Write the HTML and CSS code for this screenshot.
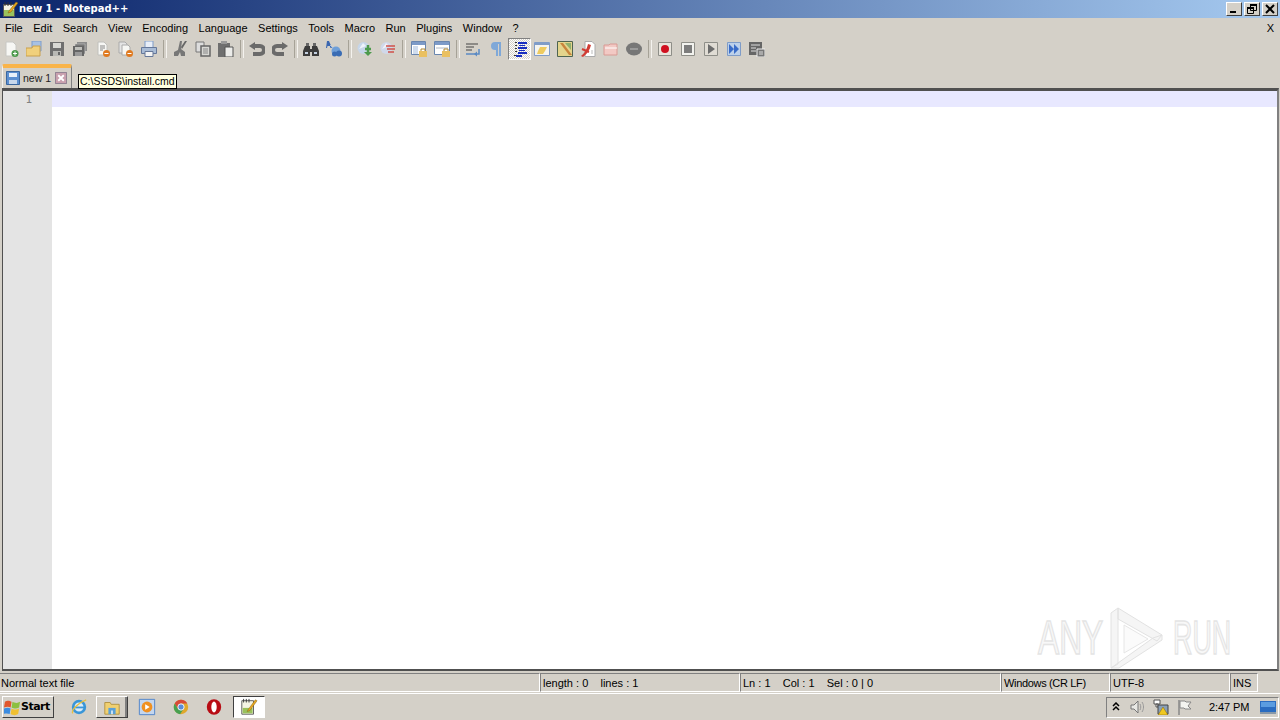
FILE: index.html
```html
<!DOCTYPE html>
<html lang="en">
<head>
<meta charset="utf-8">
<title>new 1 - Notepad++</title>
<link rel="stylesheet" href="styles.css">
</head>
<body>
<div class="app">
  <header class="titlebar">
    <svg class="ti" viewBox="0 0 16 16"><path d="M1.500 3.500h11v12h-11z" fill="#f4f4e4" stroke="#555"/><path d="M2 9h10v6H2z" fill="#9ac15c"/><path d="M3 1v4M6 1v4M9 1v4" stroke="#333"/><path d="M7 10l7-9 2 1-7 9-3 1z" fill="#e8a820" stroke="#7a5a10" stroke-width=".5"/></svg>
    <span class="title">new 1 - Notepad++</span>
    <div class="winbtns">
      <button class="wb"><svg viewBox="0 0 14 12"><path d="M3 8h6v2H3z" fill="#000"/></svg></button>
      <button class="wb"><svg viewBox="0 0 14 12"><path d="M5.500 1.500h6v6h-6zM2.500 4.500h6v6h-6z" fill="#d4d0c8" stroke="#000"/><path d="M5 1h7v2H5zM2 4h7v2H2z" fill="#000"/></svg></button>
      <button class="wb"><svg viewBox="0 0 14 12"><path d="M3 2l8 8M11 2l-8 8" stroke="#000" stroke-width="2"/></svg></button>
    </div>
  </header>

  <nav class="menubar">
    <span>File</span><span>Edit</span><span>Search</span><span>View</span><span>Encoding</span><span>Language</span><span>Settings</span><span>Tools</span><span>Macro</span><span>Run</span><span>Plugins</span><span>Window</span><span>?</span>
    <span class="menux">X</span>
  </nav>

  <div class="toolbar">
    <i class="tb"><svg viewBox="0 0 16 16"><path d="M3 1h7l3 3v11H3z" fill="#f7f7f4" stroke="#c8c8c4"/><circle cx="12" cy="12.500" r="3.500" fill="#4c9a4c"/><path d="M10 12.500h4M12 10.500v4" stroke="#fff"/></svg></i>
    <i class="tb"><svg viewBox="0 0 16 16"><path d="M6 0h9v10H6z" fill="#a7c1e4" stroke="#7f9cc8"/><path d="M0 7h6l1-2h7v10H0z" fill="#f1d07c" stroke="#c9a04c"/></svg></i>
    <i class="tb"><svg viewBox="0 0 16 16"><path d="M1 1h14v14H1z" fill="#6f6f6f"/><path d="M4 2h8v5H4z" fill="#d8d8d4"/><path d="M4 10h8v5H4z" fill="#b9b9b5"/><path d="M9 11h2v3H9z" fill="#666"/></svg></i>
    <i class="tb"><svg viewBox="0 0 16 16"><path d="M5 1h10v9H5z" fill="#8c8c8c"/><path d="M3 3h10v10H3z" fill="#777" stroke="#ccc" stroke-width=".5"/><path d="M1 5h11v10H1z" fill="#666"/><path d="M3 6h7v3H3z" fill="#c0c0bc"/><path d="M3 11h7v4H3z" fill="#999"/></svg></i>
    <i class="tb"><svg viewBox="0 0 16 16"><path d="M3 1h6l3 3v10H3z" fill="#f7f7f4" stroke="#c0c0bc"/><path d="M5 5h5M5 7h5M5 9h3" stroke="#888"/><circle cx="11.500" cy="12.500" r="3.500" fill="#e07a20"/><path d="M9.500 12.500h4" stroke="#fff"/></svg></i>
    <i class="tb"><svg viewBox="0 0 16 16"><path d="M1 1h6l2 2v9H1z" fill="#e4e4e4" stroke="#aaa"/><path d="M4 4h6l2 2v8H4z" fill="#f7f7f4" stroke="#aaa"/><circle cx="11.500" cy="12.500" r="3.500" fill="#e07a20"/><path d="M9.500 12.500h4" stroke="#fff"/></svg></i>
    <i class="tb"><svg viewBox="0 0 16 16"><path d="M4 0h8v7H4z" fill="#e8eef8" stroke="#7f9cc8"/><path d="M.5 6.500h15v6H.5z" fill="#a9bcd6" stroke="#66789a"/><path d="M4 10.500h8v5H4z" fill="#f4f4f4" stroke="#66789a"/></svg></i>
    <b class="sep"></b>
    <i class="tb"><svg viewBox="0 0 16 16"><path d="M8 0h2L9 8l4 3v4H9L8 11l-2 4H2v-4l4-2z" fill="#777"/><path d="M13 0h2L10 8 9 6z" fill="#666"/></svg></i>
    <i class="tb"><svg viewBox="0 0 16 16"><path d="M1 1h8v10H1z" fill="#ddd" stroke="#777"/><path d="M6 5h9v10H6z" fill="#d8d8d4" stroke="#666" stroke-width="1.500"/><path d="M8 8h5M8 10h5M8 12h5" stroke="#888"/></svg></i>
    <i class="tb"><svg viewBox="0 0 16 16"><path d="M0 2h12v14H0z" fill="#6f6f6f"/><path d="M3 0h6v3H3z" fill="#999"/><path d="M7 6h8v10H7z" fill="#ececea" stroke="#555"/></svg></i>
    <b class="sep"></b>
    <i class="tb"><svg viewBox="0 0 16 16"><path d="M5 5h6a3.500 3.500 0 0 1 0 8H4" fill="none" stroke="#6a6a6a" stroke-width="4"/><path d="M0 5l6-4v8z" fill="#6a6a6a"/></svg></i>
    <i class="tb"><svg viewBox="0 0 16 16"><path d="M11 5H5a3.500 3.500 0 0 0 0 8h7" fill="none" stroke="#6a6a6a" stroke-width="4"/><path d="M16 5l-6-4v8z" fill="#6a6a6a"/></svg></i>
    <b class="sep"></b>
    <i class="tb"><svg viewBox="0 0 16 16"><path d="M2 5h5v3h2V5h5l2 5v5H9v-4H7v4H0v-5z" fill="#3c3c3c"/><path d="M3 2h3v3H3zM10 2h3v3h-3z" fill="#666"/><path d="M2 11h3v2H2zM11 11h3v2h-3z" fill="#c4d0e0"/></svg></i>
    <i class="tb"><svg viewBox="0 0 16 16"><path d="M1 0h2l3 7H4.500l-.7-2H1.500L1 7H0z" fill="#3a66b0"/><path d="M4 4l4 4" stroke="#a8c0e0"/><circle cx="10" cy="10" r="4.500" fill="#6f9fd8"/><circle cx="13" cy="12.500" r="3" fill="#3a6cb4"/><circle cx="8.500" cy="13" r="2.500" fill="#3a6cb4"/></svg></i>
    <b class="sep"></b>
    <i class="tb"><svg viewBox="0 0 16 16"><circle cx="6.500" cy="7" r="6" fill="#c6d6ea"/><path d="M2 8l4-6 3 3z" fill="#eef3fa"/><path d="M11 4v7M8 8h6" stroke="#4c9a4c" stroke-width="2.500"/><path d="M7 11l4 4 4-4z" fill="#4c9a4c"/></svg></i>
    <i class="tb"><svg viewBox="0 0 16 16"><circle cx="6.500" cy="7" r="6" fill="#d0d8ea"/><path d="M2 8l4-6 3 3z" fill="#f0f2f8"/><path d="M6 5h9M7 8h8M8 11h6" stroke="#d0504a" stroke-width="1.500"/></svg></i>
    <b class="sep"></b>
    <i class="tb"><svg viewBox="0 0 16 16"><path d="M.5.500h14v13H.5z" fill="#fff" stroke="#6a86ae"/><path d="M1 1h13v3H1z" fill="#7c9ac8"/><path d="M2 5h5v8H2z" fill="#cfdcee"/><path d="M8 10h8v6H8z" fill="#eac060"/><path d="M10 10V8h4v2" fill="none" stroke="#b08830"/></svg></i>
    <i class="tb"><svg viewBox="0 0 16 16"><path d="M.5.500h15v13H.5z" fill="#fff" stroke="#6a86ae"/><path d="M1 1h14v3H1z" fill="#7c9ac8"/><path d="M2 7h12" stroke="#b0b8c4"/><path d="M8 10h8v6H8z" fill="#eac060"/><path d="M10 10V8h4v2" fill="none" stroke="#b08830"/></svg></i>
    <b class="sep"></b>
    <i class="tb"><svg viewBox="0 0 16 16"><path d="M1 3h12M1 6h8M1 9h6" stroke="#444"/><path d="M1 13h10" stroke="#5b8ac4" stroke-width="1.500"/><path d="M14 8v5h-3" fill="none" stroke="#5b8ac4" stroke-width="1.500"/><path d="M12 10.500v5l-3-2.500z" fill="#5b8ac4"/></svg></i>
    <i class="tb"><svg viewBox="0 0 16 16"><path d="M13 1H7a4 4 0 0 0 0 8h1v6h2V3h1v12h2z" fill="#7fa8d8"/></svg></i>
    <i class="tb active"><svg viewBox="0 0 16 16"><path d="M6 1h9v2H6zM7 4h6v1H7zM6 6h9v2H6zM7 9h6v1H7zM6 11h9v2H6zM4 14h6v2H4z" fill="#1a2fc0"/><path d="M3 1h2v1H3zM3 4h2v1H3zM3 7h2v1H3zM3 10h2v1H3zM2 14h2v1H2z" fill="#333"/></svg></i>
    <i class="tb"><svg viewBox="0 0 16 16"><path d="M.5 1.500h15v13H.5z" fill="#f4f4f0" stroke="#7f9cc8"/><path d="M1 2h14v2H1z" fill="#7f9cc8"/><path d="M4 10l2-4h7l-2 4-2 3H3z" fill="#eecb60"/></svg></i>
    <i class="tb"><svg viewBox="0 0 16 16"><path d="M.5.500h15v15H.5z" fill="#e3d48c" stroke="#4e6450"/><path d="M3 2l9 12h3L6 2z" fill="#c8843c"/><path d="M8 2h6v7z" fill="#8fb06c"/></svg></i>
    <i class="tb"><svg viewBox="0 0 16 16"><path d="M5 .5h7l3 3v12H5z" fill="#fff" stroke="#aaa"/><path d="M1 15c3-2 6-7 7-12l3 1c-1 5-4 9-8 12z" fill="#d03c34"/><path d="M2 8l7 3" stroke="#d03c34" stroke-width="2"/><path d="M12 9v4" stroke="#bbb"/></svg></i>
    <i class="tb"><svg viewBox="0 0 16 16"><path d="M1 4h5l1-1h7v11H1z" fill="#f2c9c4" stroke="#d99a94"/><path d="M2 7h12" stroke="#fff"/></svg></i>
    <i class="tb"><svg viewBox="0 0 16 16"><ellipse cx="8" cy="8" rx="8" ry="6.500" fill="#777"/><path d="M4 8h8" stroke="#9a9a9a" stroke-width="2"/></svg></i>
    <b class="sep"></b>
    <i class="tb"><svg viewBox="0 0 16 16"><path d="M1.500 1.500h13v13h-13z" fill="#e8e4dc" stroke="#8e8e88"/><circle cx="8" cy="8" r="4" fill="#d01020"/></svg></i>
    <i class="tb"><svg viewBox="0 0 16 16"><path d="M1.500 1.500h13v13h-13z" fill="#f2f2ee" stroke="#8e8e88"/><path d="M4 4h8v8H4z" fill="#7c7c7c"/></svg></i>
    <i class="tb"><svg viewBox="0 0 16 16"><path d="M1.500 1.500h13v13h-13z" fill="#e0dcd4" stroke="#8e8e88"/><path d="M5 3l7 5-7 5z" fill="#6c6c6c"/></svg></i>
    <i class="tb"><svg viewBox="0 0 16 16"><path d="M1.500 1.500h13v13h-13z" fill="#bcd0ea" stroke="#7f9cc8"/><path d="M3 3l5 5-5 5zM8 3l5 5-5 5z" fill="#3a6cc8"/></svg></i>
    <i class="tb"><svg viewBox="0 0 16 16"><path d="M0 1h13v13H0z" fill="#666"/><path d="M2 4h9M2 7h5M2 10h5" stroke="#ddd"/><path d="M8 8h8v8H8z" fill="#777" stroke="#eee"/><path d="M10 11h4M10 13h4" stroke="#ddd"/></svg></i>
  </div>

  <div class="tabbar">
    <div class="tab">
      <svg class="ts" viewBox="0 0 14 14"><path d="M.5.500h13v13H.5z" fill="#5c8fd0" stroke="#3a669e"/><path d="M3 2h8v4H3z" fill="#e8f0fa"/><path d="M3 9h8v4H3z" fill="#c8d8ec"/></svg>
      <span>new 1</span>
      <svg class="tx" viewBox="0 0 13 13"><path d="M0 0h13v13H0z" fill="#c9a0ae"/><path d="M.5.500h12v12H.5z" fill="none" stroke="#8c8090"/><path d="M3.500 3.500l6 6M9.500 3.500l-6 6" stroke="#fff" stroke-width="2"/></svg>
    </div>
    <div class="tooltip">C:\SSDS\install.cmd</div>
  </div>

  <main class="editor">
    <div class="gutter"><div class="lineno">1</div></div>
    <div class="text"><div class="curline"></div></div>
    <div class="watermark">
      <span class="wm-any">ANY</span>
      <svg viewBox="0 0 55 62"><path d="M2 6L9 1v56l-7 4zM9 1l44 27-5 6L9 12zM53 28v5L10 61l-8 0 42-30z" fill="#f5f5f5" stroke="#e2e2e2"/><path d="M15 18v28l24-14z" fill="#fbfbfb" stroke="#e6e6e6"/></svg>
      <span class="wm-run">RUN</span>
    </div>
  </main>

  <footer class="status">
    <div class="cell c1">Normal text file</div>
    <div class="cell c2">length : 0&nbsp;&nbsp;&nbsp; lines : 1</div>
    <div class="cell c3">Ln : 1&nbsp;&nbsp;&nbsp; Col : 1&nbsp;&nbsp;&nbsp; Sel : 0 | 0</div>
    <div class="cell c4">Windows (CR LF)</div>
    <div class="cell c5">UTF-8</div>
    <div class="cell c6">INS</div>
  </footer>

  <div class="taskbar">
    <button class="start">
      <svg viewBox="0 0 18 18"><path d="M1 3c3-2 5-1 7 0L7 9C5 8 3 8 0 9z" fill="#e0562c"/><path d="M9 3c2 1 5 2 8 0l-1 6c-3 2-6 1-8 0z" fill="#8cc040"/><path d="M0 10c3-1 5-1 7 0l-1 6c-2-1-4-1-7 0z" fill="#3c8ce0"/><path d="M8 10c2 1 5 2 8 0l-1 6c-3 2-6 1-8 0z" fill="#f0c030"/></svg>
      <span>Start</span>
    </button>
    <div class="apps">
      <i class="app-i a1"><svg viewBox="0 0 20 20"><circle cx="10" cy="10" r="6.500" fill="#dcecf8" stroke="#3a96d8" stroke-width="3"/><path d="M4 10.500h12" stroke="#3a96d8" stroke-width="2"/><path d="M3 17c-2-3 6-12 15-15" fill="none" stroke="#e8c040" stroke-width="1.500"/></svg></i>
      <i class="app-i a2"><svg viewBox="0 0 20 20"><path d="M2 5h6l1 2h9v11H2z" fill="#f0d070" stroke="#b09040"/><path d="M6 11h8v7H6z" fill="#5aa0d8"/><path d="M9 14h2v4H9z" fill="#d8e8f4"/></svg></i>
      <i class="app-i a3"><svg viewBox="0 0 20 20"><path d="M1.500 1.500h17v17h-17z" fill="#c4d6ee" stroke="#4a80c8"/><circle cx="10" cy="10" r="6" fill="#f09020"/><path d="M8 7l5 3-5 3z" fill="#fff"/></svg></i>
      <i class="app-i a4"><svg viewBox="0 0 20 20"><circle cx="10" cy="10" r="8" fill="#e0a82c"/><path d="M10 2a8 8 0 0 0-7 4l3.500 6L10 6h7a8 8 0 0 0-7-4z" fill="#d84a38"/><path d="M3 6a8 8 0 0 0 6 12l4-6-6.500 0z" fill="#48a050"/><circle cx="10" cy="10" r="3.500" fill="#5a8cd8" stroke="#fff"/></svg></i>
      <i class="app-i a5"><svg viewBox="0 0 20 20"><ellipse cx="10" cy="10" rx="8" ry="8.500" fill="#b80c14"/><ellipse cx="10" cy="10" rx="3" ry="6" fill="#fff"/></svg></i>
      <i class="app-i a6"><svg viewBox="0 0 20 20"><path d="M2 3h13v15H2z" fill="#f4f4e4" stroke="#555"/><path d="M3 11h11v6H3z" fill="#9ac15c"/><path d="M4 1v4M7 1v4M10 1v4" stroke="#333"/><path d="M9 13l8-11 2 1-8 11-3 1z" fill="#e8a820" stroke="#7a5a10" stroke-width=".5"/></svg></i>
    </div>
    <div class="tray">
      <svg class="t1" viewBox="0 0 8 10"><path d="M1 4l3-3 3 3M1 8l3-3 3 3" fill="none" stroke="#000" stroke-width="1.500"/></svg>
      <svg class="t2" viewBox="0 0 16 16"><path d="M2 6h3l4-4v12l-4-4H2z" fill="#e8e8e4" stroke="#777"/><path d="M11 5c1 2 1 4 0 6M13 3c2 3 2 7 0 10" fill="none" stroke="#999"/></svg>
      <svg class="t3" viewBox="0 0 16 16"><path d="M1 1h6v4H1zM3 5h2v3H3z" fill="#fff" stroke="#555"/><path d="M5 6h10v9H5z" fill="#8aa0b8" stroke="#444"/><path d="M10 8l5 8H5z" fill="#f0c820" stroke="#806010" stroke-width=".5"/></svg>
      <svg class="t4" viewBox="0 0 16 16"><path d="M3 1v15" stroke="#888" stroke-width="1.500"/><path d="M4 2h5l1 1h5l-3 4 3 3H9L8 9H4z" fill="#f4f4f0" stroke="#888"/></svg>
      <span class="clock">2:47 PM</span>
      <svg class="t5" viewBox="0 0 16 14"><path d="M0 1h16v11H0z" fill="#2a6cc0"/><path d="M1 2h14v5H1z" fill="#5a9ce0"/><path d="M0 12h16v2H0z" fill="#8898a8"/></svg>
    </div>
  </div>
</div>
</body>
</html>
```
FILE: styles.css
```css
* { box-sizing: border-box; }
html, body { margin: 0; height: 100%; }
body { background: #d4d0c8; font: 11px/13px "Liberation Sans", Arial, sans-serif; color: #000; overflow: hidden; }
.app { height: 720px; display: flex; flex-direction: column; }
svg { display: block; }

.titlebar { height: 18px; flex: none; display: flex; align-items: center; padding: 0 2px; background: linear-gradient(90deg, #0a246a 0%, #a6caf0 100%); }
.ti { width: 16px; height: 16px; }
.title { margin-left: 1px; color: #fff; font: bold 10px/16px "DejaVu Sans", sans-serif; }
.winbtns { margin-left: auto; display: flex; }
.wb { width: 16px; height: 14px; padding: 0; margin: 0 0 0 2px; border: 1px solid; border-color: #fff #404040 #404040 #fff; background: #d4d0c8; }
.wb:first-child { margin-left: 0; }
.wb svg { width: 14px; height: 12px; }

.menubar { height: 20px; flex: none; display: flex; align-items: center; gap: 10.5px; padding: 0 6px 0 5px; }
.menubar span { white-space: nowrap; }
.menubar .menux { margin-left: auto; }

.toolbar { height: 22px; flex: none; display: flex; align-items: center; margin-left: -1px; }
.tb { width: 23px; height: 22px; flex: none; display: flex; align-items: center; justify-content: center; }
.tb svg { width: 16px; height: 16px; }
.tb.active { margin: 0 -1px 0 1px; border: 1px solid; border-color: #808080 #fff #fff #808080; background: repeating-conic-gradient(#fff 0 25%, #d4d0c8 0 50%) 0 0 / 2px 2px; }
.sep { width: 8px; height: 22px; flex: none; display: block; }
.sep::before { content: ""; display: block; width: 2px; height: 18px; margin: 2px 3px; border-left: 1px solid #a6a297; border-right: 1px solid #f4f2ee; }

.tabbar { height: 28px; flex: none; display: flex; align-items: flex-end; padding-left: 2px; position: relative; }
.tab { width: 70px; height: 24px; display: flex; align-items: center; padding: 0 4px 0 3px; background: #d4d0c8; border-top: 4px solid #f9b44a; border-right: 1px solid #808080; border-left: 1px solid #f4f2ee; border-radius: 2px 2px 0 0; color: #222; font-size: 10.5px; }
.ts { width: 14px; height: 14px; }
.tab span { margin-left: 3px; flex: 1; }
.tx { width: 12px; height: 12px; }
.tooltip { position: absolute; left: 78px; top: 14px; width: 99px; height: 15px; background: #ffffe1; border: 1px solid #000; padding: 0 0 0 1px; white-space: nowrap; font-size: 10.5px; z-index: 2; }

.editor { flex: 1; min-height: 0; display: flex; position: relative; background: #fff; border-style: solid; border-color: #505050 #808080 #505050 #505050; border-width: 3px 2px 2px 1px; margin: 0 1px 0 2px; }
.gutter { width: 49px; background: #e4e4e4; flex: none; }
.lineno { height: 16px; padding: 1px 20px 0 0; text-align: right; color: #808080; font: 11px/16px "DejaVu Sans Mono", monospace; }
.text { flex: 1; }
.curline { height: 16px; background: #e8e8ff; }
.watermark { position: absolute; right: 45px; bottom: 0; height: 62px; display: flex; align-items: center; color: #f8f8f8; font: 48px/62px "Liberation Sans", sans-serif; -webkit-text-stroke: 1.6px #e4e4e4; }
.wm-any, .wm-run { flex: none; transform-origin: left center; }
.wm-any { width: 65px; transform: scaleX(.66); }
.wm-run { width: 59px; transform: scaleX(.56); }
.watermark svg { width: 55px; height: 62px; flex: none; margin: 0 9px 0 6px; }

.status { height: 20px; flex: none; display: flex; margin-top: 2px; padding-bottom: 1px; }
.cell { height: 19px; flex: none; line-height: 19px; padding-left: 2px; border-left: 1px solid #808080; border-top: 1px solid #808080; border-bottom: 1px solid #fff; border-right: 1px solid #fff; white-space: nowrap; }
.c1 { width: 540px; border-left: 0; padding-left: 1px; }
.c2 { width: 200px; }
.c3 { width: 261px; }
.c4 { width: 109px; letter-spacing: -.33px; }
.c5 { width: 120px; }
.c6 { width: 28px; }

.taskbar { height: 27px; flex: none; display: flex; align-items: center; padding: 0 2px; border-top: 1px solid #fff; }
.start { width: 52px; height: 22px; padding: 0 0 0 1px; display: flex; align-items: center; gap: 0; border: 1px solid; border-color: #fff #404040 #404040 #fff; background: #d4d0c8; font: bold 11px/14px "DejaVu Sans", sans-serif; letter-spacing: -.5px; }
.start svg { width: 17px; height: 17px; }
.apps { display: flex; align-items: center; height: 22px; margin-left: 15px; }
.app-i { display: flex; align-items: center; justify-content: center; flex: none; height: 22px; width: 24px; }
.app-i svg { width: 18px; height: 18px; }
.a1 { width: 20px; }
.a2 { width: 32px; margin-left: 7px; border: 1px solid; border-color: #fff #404040 #404040 #fff; box-shadow: inset -2px 0 0 #808080; }
.a3 { margin-left: 7px; }
.a4 { margin-left: 10px; }
.a5 { margin-left: 9px; }
.a6 { margin-left: 7px; width: 32px; background: #fff; border: 1px solid; border-color: #404040 #fff #fff #404040; }
.tray { margin-left: auto; margin-right: -1px; width: 173px; height: 21px; display: flex; align-items: center; padding-left: 5px; border: 1px solid; border-color: #808080 #fff #fff #808080; }
.t1 { width: 8px; height: 10px; }
.t2 { width: 16px; height: 16px; margin-left: 9px; }
.t3 { width: 16px; height: 16px; margin-left: 8px; }
.t4 { width: 16px; height: 16px; margin-left: 7px; }
.clock { margin-left: 17px; white-space: nowrap; letter-spacing: -.1px; }
.t5 { width: 16px; height: 14px; margin-left: auto; margin-right: 2px; }
```
